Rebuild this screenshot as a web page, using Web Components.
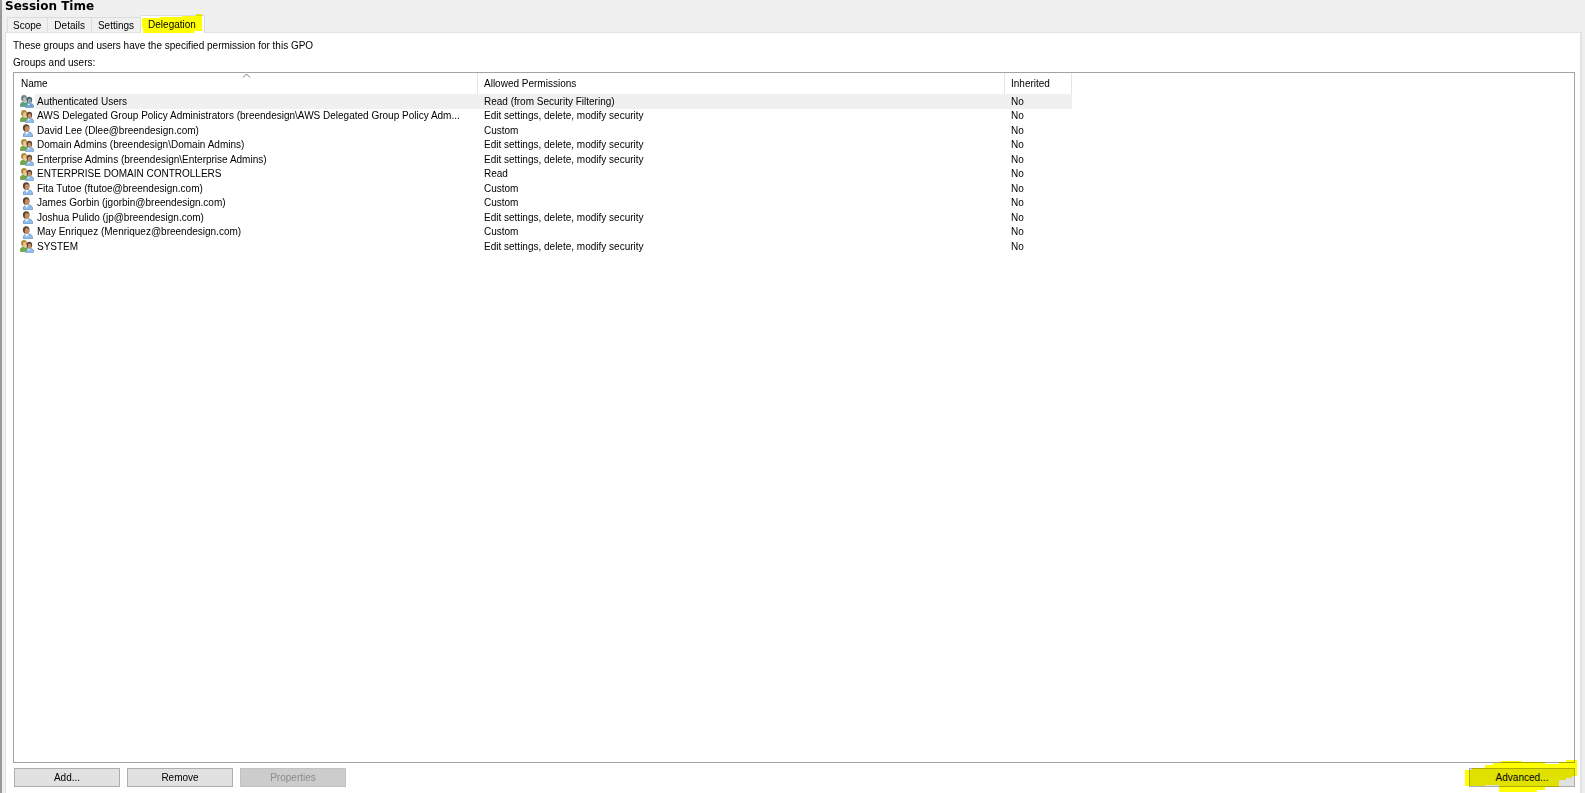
<!DOCTYPE html>
<html lang="en">
<head>
<meta charset="utf-8">
<title>Session Time</title>
<style>
html,body{height:100%;margin:0}
body{background:#f0f0f0;color:#000;font:10px/14px "Liberation Sans",Arial,sans-serif;overflow:hidden}
</style>
</head>
<body>
<gpo-window>
  <gpo-tabs slot="tabs"></gpo-tabs>
  <permission-list slot="list"></permission-list>
  <action-bar slot="actions"></action-bar>
</gpo-window>
<script>
const define = (name, html, setup) => customElements.define(name, class extends HTMLElement {
  constructor() {
    super();
    this.attachShadow({ mode: 'open' }).innerHTML = html;
  }
  connectedCallback() { if (setup) setup(this, this.shadowRoot); }
});

define('gpo-window', `
<style>
:host{display:flex;flex-direction:column;height:100vh;box-sizing:border-box;border-left:2px solid #999;padding:0 3px}
h1{margin:0;font:bold 12px/12px "DejaVu Sans",sans-serif;height:15px;color:#000}
main{flex:1;min-height:0;display:flex;flex-direction:column;background:#fff;border:1px solid #e3e3e3;border-width:1px 2px 0 1px;padding:4px 5px 6px 7px}
p{margin:0;line-height:17px}
p:nth-of-type(2){padding-bottom:1px}
::slotted(permission-list){flex:1;min-height:0}
</style>
<h1>Session Time</h1>
<slot name="tabs"></slot>
<main>
  <p>These groups and users have the specified permission for this GPO</p>
  <p>Groups and users:</p>
  <slot name="list"></slot>
  <slot name="actions"></slot>
</main>`);

define('marker-stroke', `
<style>
:host{position:absolute;mix-blend-mode:multiply;pointer-events:none}
svg{display:block}
</style>
<svg></svg>`, (el, root) => {
  const svg = root.querySelector('svg');
  const w = el.getAttribute('width'), h = el.getAttribute('height');
  svg.setAttribute('width', w);
  svg.setAttribute('height', h);
  svg.innerHTML = '<path fill="#ffff00" d="' + el.getAttribute('path') + '"/>';
});

define('gpo-tabs', `
<style>
:host{display:block}
nav{display:flex;align-items:flex-end;height:17px;padding-left:2px}
button{all:unset;box-sizing:border-box;height:15px;padding:0 6px;border:1px solid #dcdcdc;border-width:1px 1px 0 0;background:#f0f0f0;text-align:center;line-height:15px}
button:first-child{border-left-width:1px;padding-left:5px}
.active{position:relative;height:18px;margin-bottom:-1px;background:#fff;line-height:16px;padding:0 8px 0 7px}
marker-stroke{left:1px;top:-2px}
</style>
<nav role="tablist">
<button role="tab">Scope</button><button role="tab">Details</button><button role="tab">Settings</button><button role="tab" class="active" aria-selected="true">Delegation<marker-stroke width="60" height="20" path="M0 4H18V3H40V2H54V0H60V17H52V19H1V14H0Z"></marker-stroke></button>
</nav>`);

define('account-icon', `
<style>:host{display:block;flex:none;width:14px;height:13px}svg{display:block}</style>
<svg width="14" height="13" viewBox="0 0 14 13"></svg>`, (el, root) => {
  const type = el.getAttribute('type');
  const pale = type === 'muted';
  root.querySelector('svg').innerHTML = type === 'user' ? `
<path d="M3.500 12.700Q2.500 9.500 5 8.500Q8.500 6.800 11 8.600Q13.200 10.500 12.600 12.700Z" fill="#8fbdeb" stroke="#5c8fc6" stroke-width=".7"/>
<path d="M5 8L6.500 11L9 8Z" fill="#eef5fb"/>
<ellipse cx="6.200" cy="3.900" rx="3.300" ry="3.700" fill="#5c4430"/>
<ellipse cx="7" cy="5" rx="2.200" ry="3" fill="#c48d64"/>` : `
<ellipse cx="4" cy="3.300" rx="2.900" ry="3.200" fill="${pale ? '#71827c' : '#b08a3c'}"/>
<ellipse cx="4.800" cy="4.500" rx="1.800" ry="2.500" fill="${pale ? '#b4beb8' : '#f0c48c'}"/>
<path d="M.4 11.500Q0 7.500 2.800 7L5 8L7.500 7.500V11.500Z" fill="${pale ? '#56a580' : '#73a840'}" stroke="${pale ? '#48816d' : '#578d37'}" stroke-width=".6"/>
<path d="M5.500 12.600Q5.400 9.500 8 8.800Q11 7.500 13 9.400Q14 10.800 13.600 12.600Z" fill="${pale ? '#6ba2d4' : '#8fbdeb'}" stroke="#5c8fc6" stroke-width=".6"/>
<path d="M7.500 8.800L8.500 10.800L10.300 8.800Z" fill="#eef5fb"/>
<ellipse cx="9.300" cy="5" rx="2.800" ry="3.300" fill="${pale ? '#45606e' : '#5c4430'}"/>
<ellipse cx="9.500" cy="6" rx="1.800" ry="2.500" fill="${pale ? '#8ea4b2' : '#c48d64'}"/>`;
});

const edit = 'Edit settings, delete, modify security';
const accounts = [
  ['muted', 'Authenticated Users', 'Read (from Security Filtering)'],
  ['group', 'AWS Delegated Group Policy Administrators (breendesign\\AWS Delegated Group Policy Adm...', edit],
  ['user', 'David Lee (Dlee@breendesign.com)', 'Custom'],
  ['group', 'Domain Admins (breendesign\\Domain Admins)', edit],
  ['group', 'Enterprise Admins (breendesign\\Enterprise Admins)', edit],
  ['group', 'ENTERPRISE DOMAIN CONTROLLERS', 'Read'],
  ['user', 'Fita Tutoe (ftutoe@breendesign.com)', 'Custom'],
  ['user', 'James Gorbin (jgorbin@breendesign.com)', 'Custom'],
  ['user', 'Joshua Pulido (jp@breendesign.com)', edit],
  ['user', 'May Enriquez (Menriquez@breendesign.com)', 'Custom'],
  ['group', 'SYSTEM', edit]
];

define('permission-list', `
<style>
:host{display:block;box-sizing:border-box;border:1px solid #a0a3a8;background:#fff;overflow:hidden}
table{table-layout:fixed;border-collapse:separate;border-spacing:0;width:1058px}
.name{width:464px}.perm{width:527px}
th{box-sizing:border-box;height:21px;padding:0 0 0 6px;border-right:1px solid #e5e5e5;text-align:left;font-weight:400;position:relative}
th:first-child{padding-left:7px}
th svg{position:absolute;left:calc(50% - 4px);top:0}
td{height:15px;padding:0 0 0 6px;line-height:14px;white-space:nowrap}
tr:nth-child(even) td{height:14px}
.selected td{background:#f0f0f0}
.selected td:first-child{background:linear-gradient(90deg,#fff 21px,#f0f0f0 21px)}
.account{display:flex;gap:3px;height:14px;align-items:center}
</style>
<table>
<colgroup><col class="name"><col class="perm"><col></colgroup>
<thead><tr><th scope="col">Name<svg width="9" height="5" viewBox="0 0 9 5"><path d="M1 4.500L4.500 1L8 4.500" fill="none" stroke="#777"/></svg></th><th scope="col">Allowed Permissions</th><th scope="col">Inherited</th></tr></thead>
<tbody></tbody>
</table>`, (el, root) => {
  root.querySelector('tbody').innerHTML = accounts.map(([type, name, perm], i) =>
    `<tr${i ? '' : ' class="selected"'}><td><div class="account"><account-icon type="${type}"></account-icon><span>${name}</span></div></td><td>${perm}</td><td>No</td></tr>`).join('');
});

define('action-bar', `
<style>
:host{display:flex;gap:7px;padding:5px 0 0 1px}
button{width:106px;height:19px;box-sizing:border-box;padding:0;border:1px solid #adadad;background:#e1e1e1;color:#000;font:inherit;line-height:16px}
button:disabled{background:#ccc;border-color:#c2c2c2;color:#8b8b8b}
.advanced{position:relative;margin-left:auto}
.advanced button{display:block}
marker-stroke{left:-4px;top:-9px}
</style>
<button>Add...</button><button>Remove</button><button disabled>Properties</button>
<div class="advanced"><button>Advanced...</button><marker-stroke width="112" height="34" path="M1 11H7V9H20V6H28V4H36V2H57V3H80V5H94V3H101V1H112V17H107V19H101V21H94V28H80V31H72V33H34V26H20V27H0V11Z"></marker-stroke></div>`);
</script>
</body>
</html>
